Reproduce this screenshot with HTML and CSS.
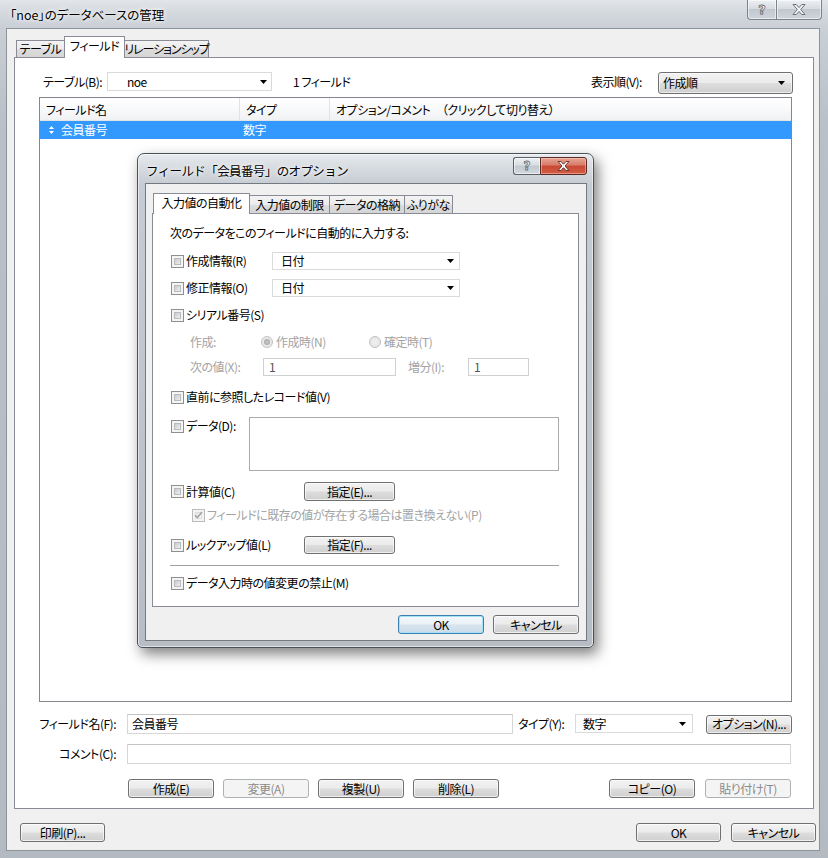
FILE: index.html
```html
<!DOCTYPE html>
<html lang="ja">
<head>
<meta charset="utf-8">
<title>「noe」のデータベースの管理</title>
<link rel="stylesheet" href="styles.css">
</head>
<body>
<div class="window">
  <div class="titlebar">
    <div class="title">「noe」のデータベースの管理</div>
    <div class="caps">
      <div class="cap help"><span class="qmark">?</span></div>
      <div class="cap close">
        <svg width="14" height="11" viewBox="0 0 14 11"><path d="M1 .5h3.2L7 3.6 9.8.5H13L8.7 5.5 13 10.5H9.8L7 7.4 4.2 10.5H1l4.3-5z" fill="#f4f5f6" stroke="#6b7077" stroke-width="1"/></svg>
      </div>
    </div>
  </div>

  <div class="client">
    <div class="tabs">
      <div class="tab t-table">テーブル</div>
      <div class="tab sel t-field">フィールド</div>
      <div class="tab t-rel">リレーションシップ</div>
    </div>

    <div class="panel">
      <div class="toprow">
        <span class="lbl l-table">テーブル(B):</span>
        <div class="combo flat c-table"><span>noe</span><svg class="arr" width="7" height="4" viewBox="0 0 7 4"><path d="M0 0h7L3.5 4z"/></svg></div>
        <span class="count">1 フィールド</span>
        <span class="spacer"></span>
        <span class="lbl l-order">表示順(V):</span>
        <div class="combo raised c-order"><span>作成順</span><svg class="arr" width="7" height="4" viewBox="0 0 7 4"><path d="M0 0h7L3.5 4z"/></svg></div>
      </div>

      <div class="list">
        <div class="lhead">
          <div class="col c1">フィールド名</div>
          <div class="col c2">タイプ</div>
          <div class="col c3">オプション/コメント　（クリックして切り替え）</div>
        </div>
        <div class="lrow sel">
          <div class="col c1"><svg class="handle" width="5" height="8" viewBox="0 0 5 8"><path d="M2.5 0L5 3H0zM2.5 8L5 5H0z" fill="#fff"/></svg>会員番号</div>
          <div class="col c2">数字</div>
          <div class="col c3"></div>
        </div>
      </div>

      <div class="frow r-name">
        <span class="flbl">フィールド名(F):</span>
        <div class="input i-name">会員番号</div>
        <span class="tlbl">タイプ(Y):</span>
        <div class="combo flat c-type"><span>数字</span><svg class="arr" width="7" height="4" viewBox="0 0 7 4"><path d="M0 0h7L3.5 4z"/></svg></div>
        <div class="btn b-opt">オプション(N)...</div>
      </div>
      <div class="frow r-comment">
        <span class="flbl">コメント(C):</span>
        <div class="input i-comment"></div>
      </div>
      <div class="brow">
        <div class="btn">作成(E)</div>
        <div class="btn disabled">変更(A)</div>
        <div class="btn">複製(U)</div>
        <div class="btn">削除(L)</div>
        <span class="spacer"></span>
        <div class="btn">コピー(O)</div>
        <div class="btn disabled">貼り付け(T)</div>
      </div>
    </div>

    <div class="footer">
      <div class="btn">印刷(P)...</div>
      <span class="spacer"></span>
      <div class="btn">OK</div>
      <div class="btn">キャンセル</div>
    </div>
  </div>

  <div class="dlg">
    <div class="dtitle">
      <span class="dtext">フィールド「会員番号」のオプション</span>
      <div class="dcaps">
        <div class="dcap help"><span class="qmark">?</span></div>
        <div class="dcap close">
          <svg width="13" height="10" viewBox="0 0 14 11"><path d="M1 .5h3.2L7 3.6 9.8.5H13L8.7 5.5 13 10.5H9.8L7 7.4 4.2 10.5H1l4.3-5z" fill="#fff" stroke="#5b2a24" stroke-width="1"/></svg>
        </div>
      </div>
    </div>
    <div class="dclient">
      <div class="dtabs">
        <div class="dtab sel w1">入力値の自動化</div>
        <div class="dtab w2">入力値の制限</div>
        <div class="dtab w3">データの格納</div>
        <div class="dtab w4">ふりがな</div>
      </div>
      <div class="dpanel">
        <div class="dl-intro">次のデータをこのフィールドに自動的に入力する:</div>

        <div class="drow dr-create">
          <span class="chk w-combo-lbl"><span class="cb"></span>作成情報(R)</span>
          <div class="combo flat c-date"><span>日付</span><svg class="arr" width="7" height="4" viewBox="0 0 7 4"><path d="M0 0h7L3.5 4z"/></svg></div>
        </div>
        <div class="drow dr-mod">
          <span class="chk w-combo-lbl"><span class="cb"></span>修正情報(O)</span>
          <div class="combo flat c-date"><span>日付</span><svg class="arr" width="7" height="4" viewBox="0 0 7 4"><path d="M0 0h7L3.5 4z"/></svg></div>
        </div>
        <div class="drow dr-serial">
          <span class="chk"><span class="cb"></span>シリアル番号(S)</span>
        </div>
        <div class="drow dr-gen dis">
          <span class="sub w-gen">作成:</span>
          <span class="radio-opt w-r1"><span class="rb on"></span>作成時(N)</span>
          <span class="radio-opt"><span class="rb"></span>確定時(T)</span>
        </div>
        <div class="drow dr-next dis">
          <span class="sub w-next">次の値(X):</span>
          <div class="input dinput i-next">1</div>
          <span class="w-inc">増分(I):</span>
          <div class="input dinput i-inc">1</div>
        </div>
        <div class="drow dr-prev">
          <span class="chk"><span class="cb"></span>直前に参照したレコード値(V)</span>
        </div>
        <div class="drow dr-data">
          <span class="chk w-data"><span class="cb"></span>データ(D):</span>
          <div class="textarea"></div>
        </div>
        <div class="drow dr-calc">
          <span class="chk w-calc"><span class="cb"></span>計算値(C)</span>
          <div class="btn b-spec">指定(E)...</div>
        </div>
        <div class="drow dr-keep dis">
          <span class="chk"><span class="cb checked"><svg width="9" height="8" viewBox="0 0 9 8"><path d="M1 4.2l2.4 2.4L8 1" fill="none" stroke="#a5a5a5" stroke-width="1.6"/></svg></span>フィールドに既存の値が存在する場合は置き換えない(P)</span>
        </div>
        <div class="drow dr-lookup">
          <span class="chk w-calc"><span class="cb"></span>ルックアップ値(L)</span>
          <div class="btn b-spec b-spec2">指定(F)...</div>
        </div>
        <div class="sep"></div>
        <div class="drow dr-lock">
          <span class="chk"><span class="cb"></span>データ入力時の値変更の禁止(M)</span>
        </div>
      </div>
      <div class="dbtns">
        <div class="btn default">OK</div>
        <div class="btn">キャンセル</div>
      </div>
    </div>
  </div>
</div>
</body>
</html>
```
FILE: styles.css
```css
* { box-sizing: border-box; }
html, body { margin: 0; padding: 0; }
body {
  width: 828px; height: 858px; overflow: hidden;
  font-family: "Noto Sans CJK JP", "Noto Sans", sans-serif;
  font-size: 12px; line-height: 16px; color: #000;
  font-feature-settings: "palt";
  letter-spacing: -0.5px;
  background: #bfc5cc;
}
.window {
  position: relative; width: 828px; height: 858px;
  display: flex; flex-direction: column;
  background: linear-gradient(180deg, #e2e5e9 0, #d4d9de 12px, #c9cfd5 28px, #b9c0c7 120px, #b3bac1 100%);
}
.titlebar { height: 28px; display: flex; flex: none; }
.title { padding: 7px 0 0 10px; font-size: 12.5px; line-height: 16px; letter-spacing: 0; text-shadow: 0 0 6px #fff, 0 0 3px #fff; }
.caps { margin-left: auto; margin-right: 6px; display: flex; align-self: flex-start; }
.cap {
  height: 20px; display: flex; align-items: center; justify-content: center;
  border: 1px solid #7d838b; border-top: none;
  background: linear-gradient(180deg, #edf0f3 0, #d7dce1 45%, #c2c8cf 50%, #cfd5db 100%);
  box-shadow: inset 0 0 0 1px rgba(255,255,255,.55);
}
.cap.help { width: 29px; border-radius: 0 0 0 4px; border-right: none; }
.cap.close { width: 46px; border-radius: 0 0 4px 0; }
.qmark { font-family: "DejaVu Sans", sans-serif; font-weight: bold; font-size: 13px; color: #f2f3f4; -webkit-text-stroke: 0.8px #676c73; line-height: 14px; letter-spacing: 0; }

.client {
  flex: 1; margin: 0 8px 7px 6px;
  background: #f0f0f0; border: 1px solid #8d939a;
  display: flex; flex-direction: column;
}
.tabs { height: 28px; display: flex; align-items: flex-end; padding: 7px 0 0 9px; flex: none; }
.tab {
  height: 17px; border: 1px solid #898c95; border-bottom: none;
  background: linear-gradient(180deg, #f4f4f4 0, #ebebeb 50%, #dddddd 51%, #d5d5d5 100%);
  display: flex; align-items: center; justify-content: center;
  white-space: nowrap; margin-right: -1px;
}
.tab.sel { height: 22px; background: #fff; margin-bottom: -1px; position: relative; z-index: 2; padding-bottom: 3px; }
.t-table { width: 49px; }
.t-field { width: 61px; }
.t-rel { width: 85px; letter-spacing: -1.1px; }

.panel {
  flex: 1; margin: 0 5px 0 7px; background: #fff;
  border: 1px solid #898c95; padding: 14px 20px 0 24px;
  display: flex; flex-direction: column;
}
.toprow { height: 22px; display: flex; align-items: flex-start; padding-left: 4px; flex: none; }
.toprow .lbl { line-height: 20px; white-space: nowrap; }
.l-table { width: 64px; }
.l-order { width: 63px; margin-right: 4px; }
.count { margin-left: 21px; line-height: 20px; }
.spacer { flex: 1; }
.combo { display: flex; align-items: center; white-space: nowrap; }
.combo .arr { margin-left: auto; flex: none; }
.combo.flat { background: #fff; border: 1px solid #dadada; }
.combo.raised {
  border: 1px solid #707070; border-radius: 3px;
  background: linear-gradient(180deg, #f2f2f2 0, #ebebeb 48%, #dddddd 52%, #cfcfcf 100%);
  box-shadow: inset 0 0 0 1px rgba(255,255,255,.6);
}
.c-table { width: 165px; height: 19px; padding: 0 4px 0 19px; }
.c-order { width: 135px; height: 22px; padding: 0 7px 0 4px; }

.list { margin-top: 3px; width: 753px; height: 605px; border: 1px solid #828790; background: #fff; flex: none; }
.lhead {
  height: 23px; display: flex;
  background: linear-gradient(180deg, #ffffff 0, #f7f8f9 60%, #f0f1f2 100%);
  border-bottom: 1px solid #e2e3e4;
}
.lhead .col { line-height: 23px; padding-left: 6px; border-right: 1px solid #e1e2e3; white-space: nowrap; }
.lhead .c3 { border-right: none; flex: 1; }
.c1 { width: 200px; }
.c2 { width: 90px; }
.lrow { height: 18px; display: flex; }
.lrow.sel { background: #3399ff; color: #fff; }
.lrow .col { line-height: 18px; white-space: nowrap; display: flex; align-items: center; }
.lrow .c1 { padding-left: 9px; }
.lrow .c2 { padding-left: 3px; }
.handle { margin-right: 7px; }

.frow { display: flex; align-items: center; height: 20px; flex: none; }
.r-name { margin-top: 12px; }
.r-comment { margin-top: 10px; }
.flbl { width: 77px; margin-right: 11px; display: flex; justify-content: flex-end; white-space: nowrap; }
.input { border: 1px solid #d6d6d6; border-top-color: #c4c4c4; background: #fff; height: 20px; padding-left: 4px; line-height: 18px; white-space: nowrap; }
.i-name { width: 386px; }
.i-comment { width: 664px; }
.tlbl { margin-left: 5px; width: 57px; white-space: nowrap; }
.c-type { width: 118px; height: 19px; padding: 0 6px 0 7px; align-self: flex-start; }
.b-opt { margin-left: 13px; width: 86px; border-color: #4a4a4a; }

.btn {
  height: 19px; width: 86px; flex: none;
  border: 1px solid #707070; border-radius: 3px;
  background: linear-gradient(180deg, #f2f2f2 0, #ebebeb 48%, #dddddd 52%, #cfcfcf 100%);
  box-shadow: inset 0 0 0 1px rgba(255,255,255,.65);
  display: flex; align-items: center; justify-content: center;
  white-space: nowrap; line-height: 16px;
}
.btn.disabled { border-color: #adb2b5; background: #f4f4f4; color: #8a8a8a; box-shadow: none; }
.btn.default { border-color: #3c7fb1; box-shadow: inset 0 0 0 1px #a7e1f8; background: linear-gradient(180deg, #f4f8fb 0, #e9f1f7 48%, #d8e5ef 52%, #cbdbe7 100%); }
.brow { display: flex; margin-top: 15px; padding-left: 89px; padding-right: 2px; flex: none; }
.brow .btn { margin-right: 9px; }
.brow .btn:last-child { margin-right: 0; }
.brow .spacer + .btn { margin-right: 10px; }

.footer { display: flex; padding: 14px 3px 8px 13px; flex: none; }
.footer .btn { width: 85px; }
.footer .btn + .btn { margin-left: 10px; }

/* Dialog */
.dlg {
  position: absolute; left: 137px; top: 153px; width: 457px; height: 495px;
  border: 1px solid #4b5057; border-radius: 7px 7px 5px 5px;
  background: linear-gradient(180deg, #e7eaee 0, #d6dbe0 14px, #c6ccd3 30px, #b6bdc5 100%);
  box-shadow: 4px 6px 14px rgba(0,0,0,.5), inset 0 0 0 1px rgba(255,255,255,.55);
  padding: 0 6px 6px 7px; display: flex; flex-direction: column; z-index: 10;
}
.dtitle { height: 29px; display: flex; flex: none; }
.dtext { padding: 9px 0 0 1px; font-size: 12.5px; line-height: 16px; font-feature-settings: normal; letter-spacing: -0.6px; text-shadow: 0 0 6px #fff, 0 0 3px #fff; }
.dcaps { margin-left: auto; margin-top: 3px; display: flex; align-self: flex-start; }
.dcap { height: 18px; display: flex; align-items: center; justify-content: center; border: 1px solid #5c6168; }
.dcap.help { width: 27px; border-right: none; border-radius: 3px 0 0 3px;
  background: linear-gradient(180deg, #eef1f4 0, #d8dde2 45%, #c3c9d0 50%, #d2d8de 100%);
  box-shadow: inset 0 0 0 1px rgba(255,255,255,.55); }
.dcap.close { width: 47px; border-radius: 0 3px 3px 0; border-color: #5b2a24;
  background: linear-gradient(180deg, #e8a493 0, #d77a67 45%, #c74733 50%, #d55e45 100%);
  box-shadow: inset 0 0 0 1px rgba(255,220,210,.45); }
.dcap .qmark { font-size: 12px; }
.dclient { flex: 1; border: 1px solid #737980; background: #f0f0f0; display: flex; flex-direction: column; }
.dtabs { height: 29px; display: flex; align-items: flex-end; padding: 9px 0 0 7px; flex: none; }
.dtab {
  height: 18px; border: 1px solid #898c95; border-bottom: none;
  background: linear-gradient(180deg, #f4f4f4 0, #ebebeb 50%, #dddddd 51%, #d5d5d5 100%);
  display: flex; align-items: center; justify-content: center; white-space: nowrap; margin-right: -1px;
}
.dtab.sel { height: 21px; background: #fff; margin-bottom: -1px; position: relative; z-index: 2; padding-bottom: 2px; }
.w1 { width: 97px; } .w2 { width: 81px; } .w3 { width: 76px; } .w4 { width: 49px; }
.dpanel { margin-left: 6px; width: 427px; height: 394px; border: 1px solid #898c95; background: #fff; padding: 0 0 0 17px; flex: none; }
.dl-intro { margin-top: 11px; height: 16px; white-space: nowrap; }
.drow { display: flex; align-items: center; height: 18px; white-space: nowrap; }
.dr-create { margin-top: 11px; }
.dr-mod { margin-top: 9px; }
.dr-serial { margin-top: 9px; }
.dr-gen { margin-top: 9px; }
.dr-next { margin-top: 7px; }
.dr-prev { margin-top: 12px; }
.dr-data { margin-top: 11px; height: 54px; align-items: flex-start; }
.dr-data .chk { height: 18px; }
.dr-calc { margin-top: 11px; height: 19px; }
.dr-keep { margin-top: 5px; padding-left: 21px; }
.dr-lookup { margin-top: 12px; }
.dr-lock { margin-top: 8px; }
.sep { margin-top: 11px; width: 389px; height: 1px; background: #a0a0a0; }
.dis { color: #a3a3a3; }
.chk { display: flex; align-items: center; padding-left: 1px; }
.cb {
  width: 13px; height: 13px; flex: none; margin-right: 2px; position: relative;
  border: 1px solid #8e8f8f; background: #f4f4f4;
  display: flex; align-items: center; justify-content: center;
}
.cb::after {
  content: ""; position: absolute; left: 2px; top: 2px; right: 2px; bottom: 2px;
  background: linear-gradient(135deg, #c9cbce 0, #eeeeee 100%);
  border: 1px solid #b9bbbe;
}
.cb.checked { border-color: #bcbcbc; }
.cb.checked::after { background: linear-gradient(135deg, #e6e6e6, #fafafa); border-color: #dedede; }
.cb.checked svg { position: relative; z-index: 1; }
.w-combo-lbl { width: 102px; }
.c-date { width: 188px; height: 18px; padding: 0 5px 0 8px; }
.sub { padding-left: 20px; }
.w-gen { width: 91px; }
.radio-opt { display: flex; align-items: center; }
.w-r1 { width: 108px; }
.rb {
  width: 12px; height: 12px; border-radius: 50%; flex: none; margin-right: 3px;
  border: 1px solid #c2c2c2; background: radial-gradient(circle, #f0f0f0 0, #e2e2e2 100%);
  position: relative;
}
.rb.on::after { content: ""; position: absolute; left: 2px; top: 2px; width: 6px; height: 6px; border-radius: 50%; background: radial-gradient(circle, #c9c9c9 0, #9d9d9d 100%); }
.w-next { width: 93px; }
.dinput { height: 18px; border-color: #cfd0d2; color: #555; line-height: 16px; padding-left: 5px; }
.i-next { width: 133px; }
.w-inc { margin-left: 12px; width: 60px; }
.i-inc { width: 61px; }
.w-data { width: 79px; }
.textarea { width: 310px; height: 54px; border: 1px solid #acacac; background: #fff; }
.w-calc { width: 134px; }
.b-spec { width: 91px; height: 19px; }
.b-spec2 { height: 18px; }
.dbtns { display: flex; justify-content: flex-end; padding-right: 7px; margin-top: 8px; }
.dbtns .btn { width: 86px; height: 19px; }
.dbtns .btn + .btn { margin-left: 9px; }
```
